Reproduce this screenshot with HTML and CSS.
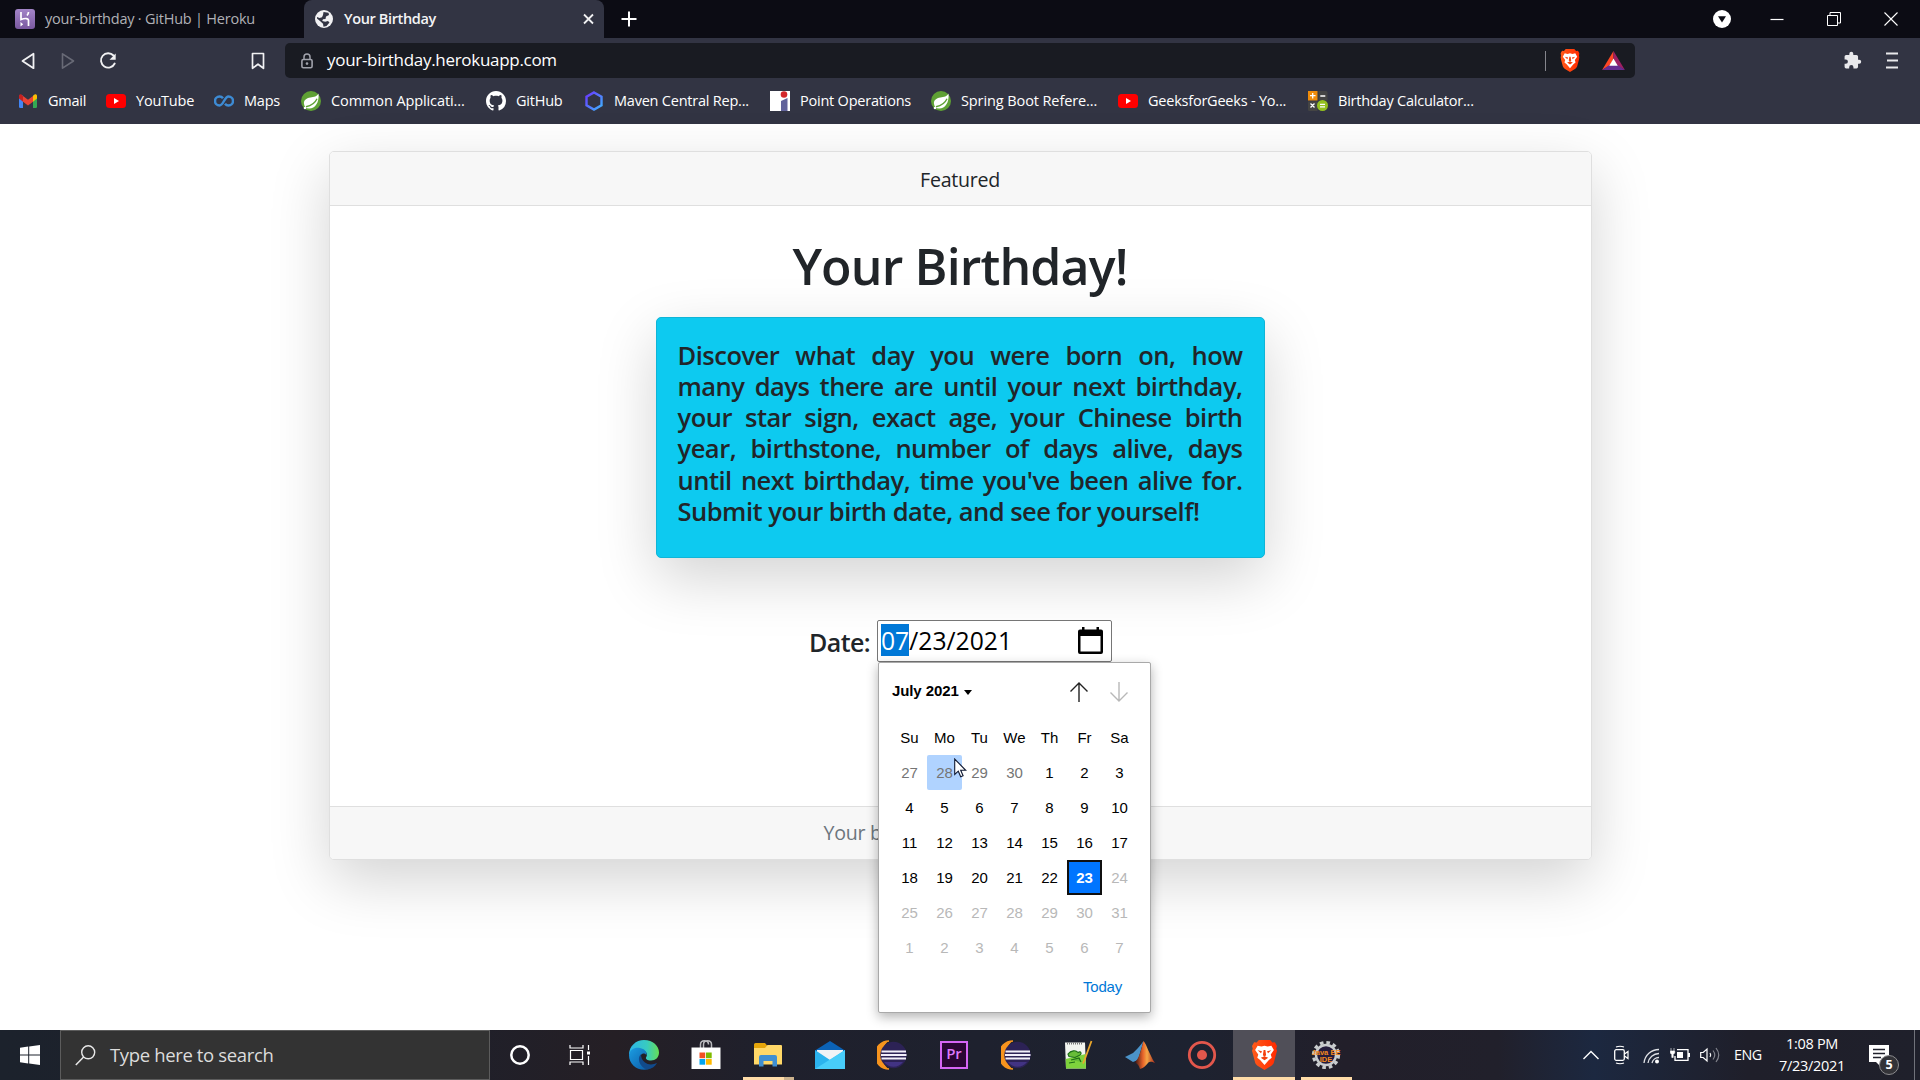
FILE: index.html
```html
<!DOCTYPE html>
<html lang="en">
<head>
<meta charset="utf-8">
<title>Your Birthday</title>
<link rel="stylesheet" href="styles.css">
</head>
<body>
<svg class="defs" width="0" height="0">
  <defs>
    <linearGradient id="hex" x1="0" y1="0" x2="1" y2="1"><stop offset="0" stop-color="#6a35ff"/><stop offset="1" stop-color="#3fb4ff"/></linearGradient>
    <linearGradient id="lion" x1="0" x2="1"><stop offset="0" stop-color="#ff5a1a"/><stop offset="1" stop-color="#ff2a00"/></linearGradient>
    <linearGradient id="edge1" x1="0" x2="1"><stop offset="0" stop-color="#2cb5e8"/><stop offset=".6" stop-color="#38cbc0"/><stop offset="1" stop-color="#66dd55"/></linearGradient>
    <linearGradient id="edge2" x1="0" y1="0" x2="1" y2="1"><stop offset="0" stop-color="#1b9de2"/><stop offset="1" stop-color="#0c59a4"/></linearGradient>
    <linearGradient id="mat" x1="0" x2="1"><stop offset="0" stop-color="#3a1515"/><stop offset=".4" stop-color="#e8642a"/><stop offset=".6" stop-color="#f5a545"/><stop offset="1" stop-color="#a8281c"/></linearGradient>
    <linearGradient id="her" x1="0" y1="0" x2="0" y2="1"><stop offset="0" stop-color="#a385c8"/><stop offset="1" stop-color="#79589f"/></linearGradient>
    <symbol id="youtube" viewBox="0 0 20 20"><rect y="3" width="20" height="14" rx="3.5" fill="#f00"/><path d="M8 7l5 3-5 3z" fill="#fff"/></symbol>
    <symbol id="spring" viewBox="0 0 20 20"><circle cx="10" cy="10" r="10" fill="#5fa134"/><path d="M17.5 2.500C16 5.500 13 6 9.500 6.500 5 7.200 2.500 9.500 3 13c.3 2.600 2.200 4.500 5 4.600C14 17.800 18.500 11.500 17.500 2.500z" fill="#fff"/><path d="M5 15.800c5-1 9-3.500 11-8" fill="none" stroke="#5fa134" stroke-width="1.400"/><circle cx="4" cy="17" r="1.300" fill="#fff"/></symbol>
    <symbol id="brave" viewBox="0 0 20 24"><path d="M5.500 0h9l1.800 2 2-.2L20 4.800 19.400 7l.6 1.500-2.500 9.500c-.3 1-1 1.900-1.900 2.500L10 24l-5.600-3.500c-.9-.6-1.600-1.500-1.900-2.500L0 8.500.6 7 0 4.800l1.700-3 2 .2z" fill="url(#lion)"/><path d="M4.500 4.500l3 .6 2.500-.6 2.500.6 3-.6 2 3.500-2.500 3.500.8 2.700-2.300 1.800L10 20l-3.500-4-2.300-1.800.8-2.700L2.500 8z" fill="#fff"/><path d="M4.500 8.200l3.500.7-.8 1.700zM15.500 8.200l-3.500.7.8 1.700zM9.300 8h1.400l.6 4.200-1.300 1-1.300-1zM7 14.200l3-1.200 3 1.200-3 2z" fill="#f4400d"/></symbol>
    <symbol id="eclipse" viewBox="0 0 30 30"><path d="M12 1A14 14 0 0 0 12 29C3 24 3 6 12 1z" fill="#f7941e"/><path d="M12 1A14 14 0 0 0 12 29" fill="none" stroke="#f7941e" stroke-width="1.500"/><circle cx="16.500" cy="15" r="13.200" fill="#2c2255"/><path d="M7 22h19a12 12 0 0 1-19 0z" fill="#423383"/><path d="M4.500 11.500h24.500M4 15h25.500M4.500 18.500h24.500" stroke="#f2effa" stroke-width="2.100"/></symbol>
  </defs>
</svg>

<header class="browser">
  <div class="tabs">
    <div class="tab">
      <svg width="20" height="20" viewBox="0 0 20 20"><rect width="20" height="20" rx="3" fill="url(#her)"/><path d="M6 3v7.500c3.500-1.300 7.500-1.600 7.500 1V17M13.500 3c0 1.500-.5 2.500-1.500 3.500" fill="none" stroke="#fff" stroke-width="1.700"/><path d="M5.500 13l2.700 2.200-2.700 2.300z" fill="#fff"/></svg>
      <span>your-birthday · GitHub | Heroku</span>
    </div>
    <div class="tab tab-active">
      <svg width="18" height="18" viewBox="0 0 18 18"><circle cx="9" cy="9" r="9" fill="#f1f1f3"/><path d="M8.500 2l5 .8.5 2.200-3 1.500-.5 2.500-2.500.3-.8 1.700 3 .8 2.800-.7 1.500 1.500-3 3.500-3 .7-.5-3L5 11 2 8.500V7l2.500 1 2.500-.8 1-2.200z" fill="#323443"/></svg>
      <span>Your Birthday</span>
      <svg class="tab-close" width="11" height="12" viewBox="0 0 11 12"><path d="M1 1.500l9 9M10 1.500l-9 9" stroke="#f0f0f2" stroke-width="1.800"/></svg>
    </div>
    <svg class="tab-new" width="16" height="16" viewBox="0 0 16 16"><path d="M8 .5v15M.5 8h15" stroke="#fff" stroke-width="2"/></svg>
    <div class="window-buttons">
      <svg width="18" height="18" viewBox="0 0 18 18"><circle cx="9" cy="9" r="9" fill="#fff"/><path d="M5 6.300h8L9 12.500z" fill="#0c0c14"/></svg>
      <svg width="14" height="14" viewBox="0 0 14 14"><path d="M.5 7.500h13" stroke="#fff" stroke-width="1.200"/></svg>
      <svg width="14" height="14" viewBox="0 0 14 14"><path d="M.5 3.500h10v10H.5zM3 3V.500h10.500v10.500H11" fill="none" stroke="#fff"/></svg>
      <svg width="14" height="14" viewBox="0 0 14 14"><path d="M.5.5l13 13M13.500.5l-13 13" stroke="#fff" stroke-width="1.100"/></svg>
    </div>
  </div>

  <div class="toolbar">
    <div class="nav">
      <svg width="14" height="18" viewBox="0 0 14 18"><path d="M12.500 1.800v14.400L1.500 9z" fill="none" stroke="#f1f1f3" stroke-width="1.800" stroke-linejoin="round"/></svg>
      <svg width="14" height="18" viewBox="0 0 14 18"><path d="M1.500 1.800v14.400L12.500 9z" fill="none" stroke="#686a76" stroke-width="1.600" stroke-linejoin="round"/></svg>
      <svg width="18" height="18" viewBox="0 0 18 18"><path d="M14.500 3.500A7.200 7.200 0 1 0 15.700 11.500" fill="none" stroke="#f1f1f3" stroke-width="1.900" stroke-linecap="round"/><path d="M16.700 1.500v6.200h-6.200z" fill="#f1f1f3"/></svg>
      <svg class="nav-mark" width="14" height="18" viewBox="0 0 14 18"><path d="M1.500 1.500h11v14.800L7 12.200l-5.500 4.100z" fill="none" stroke="#f1f1f3" stroke-width="1.700" stroke-linejoin="round"/></svg>
    </div>
    <div class="address">
      <svg width="12" height="16" viewBox="0 0 12 16"><path d="M3 6.500V4a3 3 0 0 1 6 0v2.500" fill="none" stroke="#a0a2ab" stroke-width="1.500"/><rect x=".9" y="6.500" width="10.200" height="8.300" rx="1.500" fill="none" stroke="#a0a2ab" stroke-width="1.600"/><circle cx="6" cy="10.600" r="1.300" fill="#a0a2ab"/></svg>
      <span class="url">your-birthday.herokuapp.com</span>
      <i class="divider"></i>
      <svg width="20" height="23" viewBox="0 0 20 24"><use href="#brave"/></svg>
      <svg class="bat" width="23" height="19" viewBox="0 0 24 20"><path d="M12 0L0 20l8.500-5L12 8z" fill="#ff4724"/><path d="M12 0l12 20-8.500-5L12 8z" fill="#9e1f63"/><path d="M0 20h24l-8-5.500H8z" fill="#662d91"/><path d="M12 8l4.500 7.500h-9z" fill="#fff"/></svg>
    </div>
    <div class="tools">
      <svg width="19" height="19" viewBox="0 0 24 24"><path d="M20.500 11H19V7a2 2 0 0 0-2-2h-4V3.500a2.500 2.500 0 0 0-5 0V5H4a2 2 0 0 0-2 2v3.800h1.500a2.700 2.700 0 0 1 0 5.400H2V20a2 2 0 0 0 2 2h3.800v-1.500a2.700 2.700 0 0 1 5.400 0V22H17a2 2 0 0 0 2-2v-4h1.500a2.500 2.500 0 0 0 0-5z" fill="#e9e9ec"/></svg>
      <svg width="12" height="17" viewBox="0 0 12 17"><path d="M0 1.500h12M1 8.500h11M0 15.500h12" stroke="#e9e9ec" stroke-width="1.900"/></svg>
    </div>
  </div>

  <nav class="bookmarks">
    <a class="w88"><svg width="20" height="20" viewBox="0 0 20 20"><path d="M1 4.500h4V17H2.200A1.200 1.200 0 0 1 1 15.800z" fill="#4285f4"/><path d="M15 4.500h4v11.300a1.200 1.200 0 0 1-1.200 1.200H15z" fill="#34a853"/><path d="M15 5l1-1.200c1.300-1.200 3-.5 3 1.200v2.500l-4 3.200z" fill="#fbbc04"/><path d="M5 10.700V5l5 3.800L15 5v5.700l-5 3.800z" fill="#ea4335"/><path d="M1 7.500V5c0-1.700 1.700-2.400 3-1.200L5 5v5.700z" fill="#c5221f"/></svg><span>Gmail</span></a>
    <a class="w108"><svg width="20" height="20"><use href="#youtube"/></svg><span>YouTube</span></a>
    <a class="w87"><svg width="20" height="20" viewBox="0 0 20 20"><path d="M9 7.300C8 6 7 5.500 5.500 5.500a4.500 4.500 0 0 0 0 9C9.500 14.500 10.500 5.500 14.500 5.500a4.500 4.500 0 0 1 0 9c-1.500 0-2.500-.5-3.500-1.800" fill="none" stroke="#3d8bd4" stroke-width="2.500"/></svg><span>Maps</span></a>
    <a class="w185"><svg width="20" height="20"><use href="#spring"/></svg><span class="wide">Common Applicati...</span></a>
    <a class="w98"><svg width="20" height="20" viewBox="0 0 16 16"><path fill="#fff" d="M8 0C3.580 0 0 3.580 0 8c0 3.540 2.290 6.530 5.470 7.590.4.070.55-.17.55-.38 0-.19-.01-.82-.01-1.490-2.010.37-2.530-.49-2.690-.94-.09-.23-.48-.94-.82-1.130-.28-.15-.68-.52-.01-.53.63-.01 1.080.58 1.230.82.72 1.210 1.870.87 2.330.66.07-.52.28-.87.51-1.070-1.780-.2-3.640-.89-3.640-3.950 0-.87.31-1.590.82-2.150-.08-.2-.36-1.020.08-2.120 0 0 .67-.21 2.200.82.64-.18 1.320-.27 2-.27s1.360.09 2 .27c1.530-1.040 2.200-.82 2.200-.82.44 1.100.16 1.920.08 2.120.51.56.82 1.270.82 2.150 0 3.070-1.870 3.750-3.650 3.950.29.25.54.73.54 1.480 0 1.070-.01 1.930-.01 2.200 0 .21.15.46.55.38A8.010 8.010 0 0 0 16 8c0-4.420-3.580-8-8-8z"/></svg><span>GitHub</span></a>
    <a class="w186"><svg width="20" height="20" viewBox="0 0 20 20"><path d="M10 1.500l7.500 4.300v8.400L10 18.500l-7.500-4.300V5.800z" fill="none" stroke="url(#hex)" stroke-width="2.400"/></svg><span>Maven Central Rep...</span></a>
    <a class="w161"><svg width="20" height="20" viewBox="0 0 20 20"><path d="M0 0h20v20H0z" fill="#fff"/><circle cx="14" cy="3.500" r="3.300" fill="#d3272c"/><path d="M11 10l6.500-3v13H11z" fill="#62639b"/></svg><span>Point Operations</span></a>
    <a class="w187"><svg width="20" height="20"><use href="#spring"/></svg><span class="wide">Spring Boot Refere...</span></a>
    <a class="w190"><svg width="20" height="20"><use href="#youtube"/></svg><span>GeeksforGeeks - Yo...</span></a>
    <a><svg width="20" height="20" viewBox="0 0 20 20"><path d="M0 0h9.500v9.500H0z" fill="#f08c0a"/><path d="M10.500 0H18a1.500 1.500 0 0 1 1.500 1.500v8h-9zM0 10.500h9.500V20H1.500A1.500 1.500 0 0 1 0 18.500z" fill="#444"/><circle cx="14.500" cy="14.500" r="5.500" fill="#93c01f"/><path d="M2 4.700h5.500M4.700 2v5.500M12.300 5h5M2.500 12.500l4 4M6.500 12.500l-4 4M12 13.300h5M12 15.800h5" stroke="#fff" stroke-width="1.300"/></svg><span>Birthday Calculator...</span></a>
  </nav>
</header>

<main class="page">
  <section class="card">
    <div class="card-header">Featured</div>
    <div class="card-body">
      <h1>Your Birthday!</h1>
      <div class="intro">Discover what day you were born on, how many days there are until your next birthday, your star sign, exact age, your Chinese birth year, birthstone, number of days alive, days until next birthday, time you've been alive for. Submit your birth date, and see for yourself!</div>
      <div class="field">
        <label>Date:</label>
        <div class="date-input">
          <span class="date-value"><mark>07</mark>/23/2021</span>
          <svg width="25" height="27" viewBox="0 0 25 27"><path d="M2 2.500h21a2 2 0 0 1 2 2V25a2 2 0 0 1-2 2H2a2 2 0 0 1-2-2V4.500a2 2 0 0 1 2-2zM2.500 9v15.500h20V9z" fill="#000" fill-rule="evenodd"/><path d="M4 0h2.500v3H4zM18.500 0H21v3h-2.500z"/></svg>
          <div class="picker">
            <div class="picker-head">
              <b>July 2021</b><i class="caret"></i>
              <svg class="up" width="18" height="20" viewBox="0 0 18 20"><path d="M9 20V1M.5 9.500L9 1l8.500 8.500" fill="none" stroke="#222" stroke-width="1.400"/></svg>
              <svg width="18" height="20" viewBox="0 0 18 20"><path d="M9 0v19M.5 10.500L9 19l8.500-8.500" fill="none" stroke="#b8b8b8" stroke-width="1.400"/></svg>
            </div>
            <div class="days">
              <span>Su</span><span>Mo</span><span>Tu</span><span>We</span><span>Th</span><span>Fr</span><span>Sa</span>
              <span class="prev">27</span><span class="prev hover">28</span><span class="prev">29</span><span class="prev">30</span><span>1</span><span>2</span><span>3</span>
              <span>4</span><span>5</span><span>6</span><span>7</span><span>8</span><span>9</span><span>10</span>
              <span>11</span><span>12</span><span>13</span><span>14</span><span>15</span><span>16</span><span>17</span>
              <span>18</span><span>19</span><span>20</span><span>21</span><span>22</span><span class="selected">23</span><span class="off">24</span>
              <span class="off">25</span><span class="off">26</span><span class="off">27</span><span class="off">28</span><span class="off">29</span><span class="off">30</span><span class="off">31</span>
              <span class="off">1</span><span class="off">2</span><span class="off">3</span><span class="off">4</span><span class="off">5</span><span class="off">6</span><span class="off">7</span>
            </div>
            <div class="today">Today</div>
            <svg class="cursor" width="13" height="20" viewBox="0 0 13 20"><path d="M.7 1v15.500l3.600-3.300 2.400 5.500 2.400-1-2.400-5.400h5z" fill="#fff" stroke="#111a33" stroke-width="1.100"/></svg>
          </div>
        </div>
      </div>
    </div>
    <div class="card-footer">Your b</div>
  </section>
</main>

<footer class="taskbar">
  <div class="start"><svg width="20" height="20" viewBox="0 0 20 20"><path d="M0 2.800l8.200-1.200v8H0zM9.200 1.500L20 0v9.600H9.200zM0 10.500h8.200v8L0 17.300zM9.200 10.500H20V20L9.200 18.600z" fill="#fff"/></svg></div>
  <div class="search"><svg width="21" height="21" viewBox="0 0 21 21"><circle cx="13.200" cy="7.300" r="6.500" fill="none" stroke="#e8e8e8" stroke-width="1.400"/><path d="M8.600 12L.8 20" stroke="#e8e8e8" stroke-width="1.500"/></svg><span>Type here to search</span></div>
  <div class="sys"><svg width="20" height="20" viewBox="0 0 20 20"><circle cx="10" cy="10" r="8.700" fill="none" stroke="#fff" stroke-width="2.500"/></svg></div>
  <div class="sys"><svg width="22" height="20" viewBox="0 0 22 20"><path d="M1.500 5.500h12v9h-12zM1 0v3h13V0M1 20v-3h13v3M19.500 0v5M19.500 11v9" fill="none" stroke="#fff" stroke-width="1.200"/><path d="M18 6.500h3v3h-3z" fill="#fff"/></svg></div>
  <div class="apps">
    <div class="app"><svg width="30" height="30" viewBox="0 0 30 30"><path d="M0 15C0 6 7 0 15 0c9 0 15 6 15 12.500 0 5-3.500 8-8 8-4 0-5.500-1.500-5-3 2-2.500 1-7-4.500-7C6 10.500 1 13 0 15z" fill="url(#edge1)"/><path d="M0 15C1 9 6 7 11 8c5 1 7 4 6.500 7-.8-1-2.500-1.800-4-1.300-3.500 1.300-4 8 .5 12 2 1.800 5 3.300 7 3C11 32.500 0 26 0 15z" fill="url(#edge2)"/><path d="M12 14.300C8 18 10 25 15.500 28.500c5 2 10-1 12.500-5.500-4 2-9 2-12-.5-3-2.300-4-5-4-8.200z" fill="#114a8b"/></svg></div>
    <div class="app"><svg width="30" height="30" viewBox="0 0 30 30"><path d="M9.500 8V4.500c0-5 8-5 8 0M12.500 8V4.500c0-5 8-5 8 0V8" fill="none" stroke="#b9b9bd" stroke-width="1.500"/><path d="M.5 7.500h29V29h-29z" fill="#fff"/><path d="M8.500 12.500h5.700v5.700H8.500z" fill="#f25022"/><path d="M15 12.500h5.700v5.700H15z" fill="#7fba00"/><path d="M8.500 19h5.700v5.700H8.500z" fill="#00a4ef"/><path d="M15 19h5.700v5.700H15z" fill="#ffb900"/></svg></div>
    <div class="app open open-group"><svg width="30" height="30" viewBox="0 0 30 30"><path d="M1 4.500A1.500 1.500 0 0 1 2.500 3H12l2.500 3v4H1z" fill="#e5a50a"/><path d="M1 8h11l2.500-3H28a1 1 0 0 1 1 1v18.500H1z" fill="#ffd868"/><path d="M6 26.500V17a2 2 0 0 1 2-2h14a2 2 0 0 1 2 2v9.500h-4.500V21h-9v5.500z" fill="#3f8fd2"/></svg></div>
    <div class="app"><svg width="30" height="30" viewBox="0 0 30 30"><path d="M15 1l15 9.500V20H0v-9.500z" fill="#0b62b5"/><path d="M2 10h26v8L15 24 2 18z" fill="#f1f3f6"/><path d="M0 10l15 10 15-10v19H0z" fill="#2bb3ee"/><path d="M0 29L30 10v19z" fill="#48cdfa"/></svg></div>
    <div class="app"><svg width="30" height="30"><use href="#eclipse"/></svg></div>
    <div class="app"><span class="pr">Pr</span></div>
    <div class="app"><svg width="30" height="30"><use href="#eclipse"/></svg></div>
    <div class="app"><svg width="30" height="30" viewBox="0 0 30 30"><path d="M2 2.500h20l1 26H3z" fill="#f3f5f0"/><path d="M2.700 19l19.800-5 .5 14.500H3z" fill="#7ed33c"/><path d="M4 3.500h16" stroke="#777" stroke-width="2" stroke-dasharray="1 1"/><path d="M5 14c3-4 8-4 10-1.500 3-2 4 1 2 2.500l-5 2.500-6-1zM8 20l8-2 2 4M6 23l6-1" fill="#67bd38" stroke="#1d6e18" stroke-width="1.200"/><path d="M28.500 1L21.500 20l-1.500 3.500" fill="none" stroke="#e9a62c" stroke-width="1.800"/></svg></div>
    <div class="app"><svg width="30" height="30" viewBox="0 0 30 30"><path d="M0 17l8-4 5-5c2-2 4-5 5.500-7L13 20l-5 2z" fill="#4b93c9"/><path d="M18.500 1c3 3 6 14 11.500 22-3-1-4.500-2-7 0-2 2-4 5-8 6-1-4-3-5-5-7 4-3 6-12 8.500-21z" fill="url(#mat)"/></svg></div>
    <div class="app"><svg width="30" height="30" viewBox="0 0 30 30"><circle cx="15" cy="15" r="12.700" fill="none" stroke="#e2574c" stroke-width="2.800"/><circle cx="15" cy="15" r="5" fill="#e2574c"/></svg></div>
    <div class="app open active"><svg width="25" height="30" viewBox="0 0 20 24"><use href="#brave"/></svg></div>
    <div class="app open"><svg width="30" height="30" viewBox="0 0 30 30"><circle cx="15" cy="15" r="12.500" fill="none" stroke="#c9ccce" stroke-width="3.200" stroke-dasharray="3.600 2.945"/><circle cx="15" cy="15" r="10" fill="#241c3d" stroke="#c9ccce" stroke-width="2.400"/><text x="15" y="14.500" class="gear-label">Java EE</text><text x="15" y="21.500" class="gear-label">IDE</text></svg></div>
  </div>
  <div class="tray">
    <svg width="16" height="10" viewBox="0 0 16 10"><path d="M.5 9L8 1.500 15.500 9" fill="none" stroke="#fff" stroke-width="1.400"/></svg>
    <svg width="15" height="20" viewBox="0 0 15 20"><rect x=".7" y="4.700" width="9.600" height="10.600" rx="1.500" fill="none" stroke="#fff" stroke-width="1.300"/><path d="M10.500 9l3.500-2.500v7L10.500 11M2 2q4-1.500 8 0M2 18q4 1.500 8 0" fill="none" stroke="#fff" stroke-width="1.200"/></svg>
    <svg width="17" height="17" viewBox="0 0 17 17"><path d="M1 16A15 15 0 0 1 16 2.500M5 16A11 11 0 0 1 16 6.500M9 16A7 7 0 0 1 16 10.500" fill="none" stroke="#dfe1e6" stroke-width="1.300"/><circle cx="14" cy="14.500" r="2" fill="#fff"/></svg>
    <svg width="20" height="14" viewBox="0 0 20 14"><path d="M7 1.700h11v10.600H5V8" fill="none" stroke="#fff" stroke-width="1.300"/><path d="M7 4h6v6H7zM18 5h2v4h-2z" fill="#fff"/><path d="M1 0v3M4 0v3M.3 3h4.400v2L3.200 6.500v3H1.800v-3L.3 5z" fill="#fff" stroke="#fff" stroke-width=".6"/></svg>
    <svg width="21" height="16" viewBox="0 0 21 16"><path d="M.7 5.500h2.500L7 2v12L3.200 10.500H.7z" fill="none" stroke="#fff" stroke-width="1.200"/><path d="M10 6q1.500 2 0 4" fill="none" stroke="#fff" stroke-width="1.200"/><path d="M13 3.500q3.500 4.500 0 9M16 1q5.500 7 0 14" fill="none" stroke="#81838c" stroke-width="1.200"/></svg>
    <span class="lang">ENG</span>
    <div class="clock"><span>1:08 PM</span><span>7/23/2021</span></div>
    <div class="notify"><svg width="20" height="21" viewBox="0 0 20 21"><path d="M0 0h20v17h-9v4l-4-4H0z" fill="#fff"/><path d="M4 4.500h12M4 8.500h12M4 12.500h8" stroke="#20212c" stroke-width="1.300"/></svg><b>5</b></div>
  </div>
</footer>
</body>
</html>
```
FILE: styles.css
```css
* { box-sizing: border-box; }
html, body { height: 100%; }
body {
  margin: 0;
  display: flex;
  flex-direction: column;
  overflow: hidden;
  background: #fff;
  color: #212529;
  font-family: "Open Sans", "Noto Sans", sans-serif;
}
svg { display: block; flex: none; }
.defs { position: absolute; }

/* Browser chrome */
.browser { height: 124px; flex: none; background: #323443; color: #fff; font-size: 14.5px; letter-spacing: -.22px; white-space: nowrap; }
.browser span { padding-bottom: 2px; }
.tabs { height: 38px; display: flex; align-items: center; background: #0c0c14; }
.tab { width: 304px; height: 38px; display: flex; align-items: center; padding-left: 15px; gap: 10px; color: #b1b1b6; }
.tab-active { width: 300px; padding: 0 10px 0 11px; gap: 11px; background: #323443; color: #f4f4f6; font-weight: 600; border-radius: 8px 8px 0 0; letter-spacing: -.37px; }
.tab-close { margin-left: auto; }
.tab-new { margin-left: 17px; }
.window-buttons { margin-left: auto; display: flex; align-items: center; padding-right: 22px; gap: 43px; }
.window-buttons svg:first-child { margin-right: -4px; }

.toolbar { height: 45px; display: flex; align-items: center; }
.nav { width: 285px; display: flex; align-items: center; padding-left: 21px; }
.nav svg:nth-child(2) { margin-left: 26px; }
.nav svg:nth-child(3) { margin-left: 24px; }
.nav .nav-mark { margin-left: auto; margin-right: 20px; }
.address { width: 1350px; height: 35px; display: flex; align-items: center; padding: 0 10px 0 16px; background: #191b22; border-radius: 5px; }
.url { margin-left: 14px; font-size: 17px; letter-spacing: -.3px; }
.divider { width: 1px; height: 20px; margin: 0 14px 0 auto; background: #85868d; }
.bat { margin-left: 22px; }
.tools { margin-left: auto; display: flex; align-items: center; gap: 24px; padding-right: 22px; }

.bookmarks { height: 36px; display: flex; align-items: center; padding-left: 18px; }
.bookmarks a { display: flex; align-items: center; gap: 10px; }
.bookmarks .wide { letter-spacing: -.1px; }
.w88 { width: 88px; } .w108 { width: 108px; } .w87 { width: 87px; } .w185 { width: 185px; } .w98 { width: 98px; }
.w186 { width: 186px; } .w161 { width: 161px; } .w187 { width: 187px; } .w190 { width: 190px; }

/* Page */
.page { flex: 1; padding-top: 27px; }
.card {
  width: 1263px;
  height: 709px;
  margin: 0 auto;
  display: flex;
  flex-direction: column;
  border: 1px solid #dfdfdf;
  border-radius: 5px;
  background: #fff;
  box-shadow: 0 20px 60px rgba(0, 0, 0, .175);
}
.card-header, .card-footer { display: flex; align-items: center; background: #f7f7f7; font-size: 19.6px; letter-spacing: -.28px; }
.card-header { justify-content: center; height: 54px; padding-top: 1px; border-bottom: 1px solid #dfdfdf; border-radius: 4px 4px 0 0; }
.card-footer { height: 53px; padding: 0 0 1px 494px; border-top: 1px solid #dfdfdf; color: #6c757d; border-radius: 0 0 4px 4px; }
.card-body { flex: 1; display: flex; flex-direction: column; align-items: center; padding-top: 30px; }
h1 { margin: 0 0 21px; font-size: 50px; line-height: 60px; font-weight: 600; letter-spacing: -.85px; }
.intro {
  width: 609px;
  height: 241px;
  padding: 22px 21px;
  background: #0dcaf0;
  border: 1px solid #0fb5d7;
  border-radius: 5px;
  box-shadow: 0 20px 60px rgba(0, 0, 0, .175);
  font-size: 25.5px;
  line-height: 31.15px;
  font-weight: 600;
  letter-spacing: -.5px;
  text-align: justify;
}
.field { display: flex; align-items: center; margin-top: 62px; gap: 7px; padding-left: 1px; }
label { padding-top: 2px; font-size: 25px; font-weight: 600; letter-spacing: -.6px; }
.date-input {
  position: relative;
  width: 235px;
  height: 42px;
  display: flex;
  align-items: center;
  justify-content: space-between;
  padding: 0 8px 0 3px;
  background: #fff;
  border: 1px solid #767676;
  border-radius: 2px;
  color: #000;
  font-size: 24.7px;
  line-height: 34px;
}
.date-input > svg { margin-bottom: 2px; }
.date-value mark { display: inline-block; height: 32px; background: #0078d7; color: #fff; }
.picker {
  position: absolute;
  left: 0;
  top: 41px;
  width: 273px;
  height: 351px;
  padding: 12px 13px;
  background: #fff;
  border: 1px solid #a9a9a9;
  border-radius: 2px;
  box-shadow: 0 4px 12px rgba(0, 0, 0, .3);
  font: 15px/35px "Liberation Sans", Arial, sans-serif;
}
.picker-head { display: flex; align-items: center; height: 34px; padding-right: 9px; }
.picker-head b { padding-bottom: 3px; letter-spacing: -.1px; }
.caret { margin: 0 0 0 5px; border: 4.5px solid transparent; border-top: 5px solid #000; border-bottom: 0; }
.up { margin: 0 22px 0 auto; }
.days { display: grid; grid-template-columns: repeat(7, 35px); grid-auto-rows: 35px; margin-top: 11px; text-align: center; }
.days .prev { color: #757575; }
.days .off { color: #b8b8b8; }
.days .hover { background: #b0d3ff; border-radius: 2px; }
.days .selected { background: #0075ff; border: 2px solid #101010; color: #fff; font-weight: 700; line-height: 31px; }
.today { margin: 4px 15px 0 0; text-align: right; color: #0078d7; letter-spacing: -.2px; }
.cursor { position: absolute; left: 75px; top: 95px; }

/* Taskbar */
.taskbar { height: 50px; flex: none; display: flex; align-items: center; background: linear-gradient(90deg, #1c222c 0, #1e202b 22%, #251f25 32%, #1f202c 40%, #1d2230 62%, #221f2a 70%, #21202b 78%, #1c2840 83%, #1f1f2a 91%, #1f202b 100%); color: #fff; }
.start { width: 60px; display: flex; justify-content: center; }
.search { width: 430px; height: 50px; display: flex; align-items: center; gap: 14px; padding-left: 14px; background: #333; border: 1px solid #5c5c5c; color: #dcdcdc; font-size: 18.5px; letter-spacing: -.36px; }
.search span { padding-bottom: 2px; }
.sys { width: 60px; display: flex; justify-content: center; }
.apps { display: flex; margin-left: 3px; }
.app { width: 62px; height: 50px; display: flex; align-items: center; justify-content: center; }
.open { padding-top: 3px; border-bottom: 3px solid transparent; background: linear-gradient(#ffdca8, #ffdca8) center bottom / 51px 3px no-repeat border-box; }
.open-group { background: linear-gradient(90deg, #ffdca8 41px, #cbb28e 41px) center bottom / 51px 3px no-repeat border-box; }
.active { background: linear-gradient(#ffdca8, #ffdca8) left bottom / 100% 3px no-repeat border-box, #504f58; }
.pr { width: 28px; height: 28px; border: 2px solid #d665f5; background: #2a0634; color: #dd78fa; font: 600 15px/21px "Open Sans", sans-serif; text-align: center; }
.gear-label { fill: #f58a20; font: 700 7.5px "Liberation Sans", sans-serif; text-anchor: middle; }
.tray { margin-left: auto; display: flex; align-items: center; height: 50px; padding-right: 5px; }
.tray svg:nth-of-type(2) { margin-left: 15px; }
.tray svg:nth-of-type(3) { margin-left: 14px; }
.tray svg:nth-of-type(4) { margin-left: 10px; }
.tray svg:nth-of-type(5) { margin-left: 10px; }
.lang { margin-left: 13px; width: 28px; padding-bottom: 1px; font-size: 14.3px; letter-spacing: -.5px; }
.clock { width: 66px; margin-left: 17px; padding-bottom: 1px; display: flex; flex-direction: column; align-items: center; font-size: 14.5px; line-height: 22px; letter-spacing: -.3px; }
.notify { position: relative; margin-left: 24px; padding-right: 25px; height: 50px; border-right: 1px solid #70727a; padding-top: 15px; }
.notify b { position: absolute; left: 10px; top: 25px; width: 20px; height: 20px; border: 1px solid #8b8b8e; border-radius: 50%; background: #333338; font-size: 12.5px; line-height: 18px; text-align: center; }
```
